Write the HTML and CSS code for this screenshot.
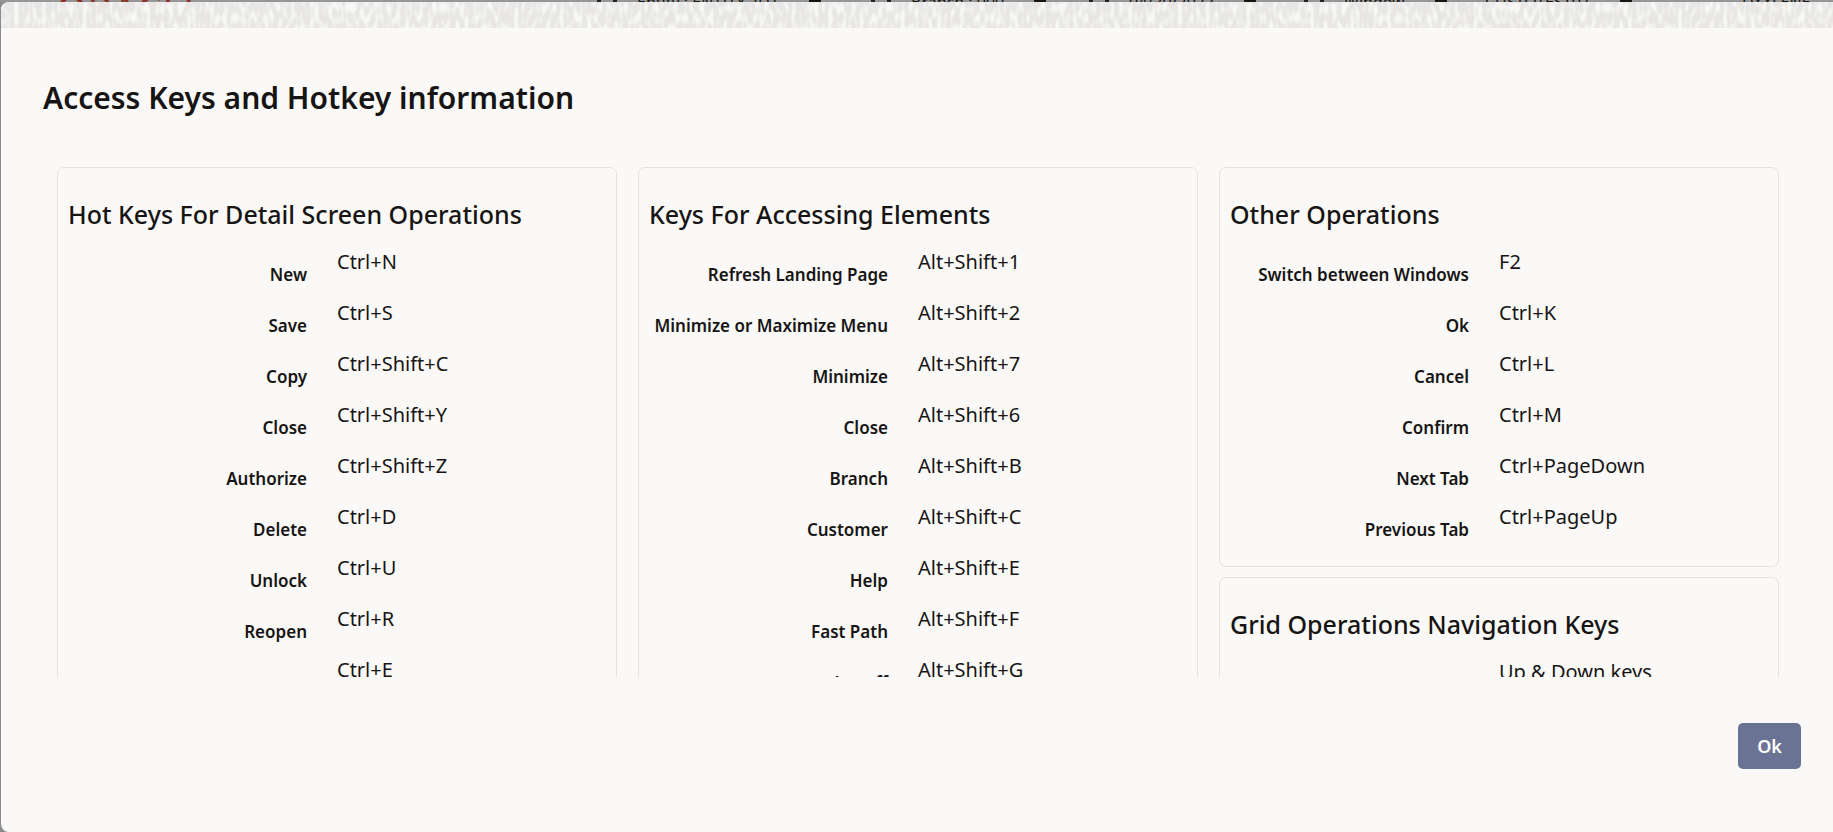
FILE: index.html
```html
<!DOCTYPE html>
<html lang="en">
<head>
    <meta charset="UTF-8">
    <meta name="viewport" content="width=device-width, initial-scale=1.0">
    <title>Access Keys and Hotkey information</title>
    <link rel="stylesheet" href="styles.css">
</head>
<body>
<div class="app-bar">
    <span class="brand">ORACLE</span>
    <span class="bar-item"><i class="bar-icon"></i>Entity : ENTITY_ID1<i class="bar-dot"></i></span>
    <span class="bar-item"><i class="bar-icon"></i>Branch : 000<i class="bar-dot"></i></span>
    <span class="bar-item"><i class="bar-icon"></i>04/20/2022<i class="bar-dot"></i></span>
    <span class="bar-item"><i class="bar-icon"></i>Window<i class="bar-dot"></i></span>
    <span class="bar-item">CUSTOTEST07<i class="bar-dot"></i></span>
    <span class="bar-item">DXXLENE</span>
</div>
<div class="dialog" role="dialog" aria-labelledby="title">
    <svg class="strip" aria-hidden="true">
        <filter id="grain" x="0" y="0" width="100%" height="100%">
            <feTurbulence type="fractalNoise" baseFrequency="0.22 0.09" numOctaves="1" seed="4"/>
            <feColorMatrix values="0 0 0 0 1  0 0 0 0 1  0 0 0 0 1  4 0 0 0 -1.7"/>
        </filter>
        <rect width="100%" height="100%" fill="#e8e7e5"/>
        <rect width="100%" height="100%" filter="url(#grain)" opacity="0.65"/>
    </svg>
    <h1 class="title" id="title">Access Keys and Hotkey information</h1>
    <div class="content">
        <div class="column">
            <section class="card">
                <h2>Hot Keys For Detail Screen Operations</h2>
                <dl class="keys">
                    <dt>New</dt><dd>Ctrl+N</dd>
                    <dt>Save</dt><dd>Ctrl+S</dd>
                    <dt>Copy</dt><dd>Ctrl+Shift+C</dd>
                    <dt>Close</dt><dd>Ctrl+Shift+Y</dd>
                    <dt>Authorize</dt><dd>Ctrl+Shift+Z</dd>
                    <dt>Delete</dt><dd>Ctrl+D</dd>
                    <dt>Unlock</dt><dd>Ctrl+U</dd>
                    <dt>Reopen</dt><dd>Ctrl+R</dd>
                    <dt></dt><dd>Ctrl+E</dd>
                </dl>
            </section>
        </div>
        <div class="column">
            <section class="card">
                <h2>Keys For Accessing Elements</h2>
                <dl class="keys">
                    <dt>Refresh Landing Page</dt><dd>Alt+Shift+1</dd>
                    <dt>Minimize or Maximize Menu</dt><dd>Alt+Shift+2</dd>
                    <dt>Minimize</dt><dd>Alt+Shift+7</dd>
                    <dt>Close</dt><dd>Alt+Shift+6</dd>
                    <dt>Branch</dt><dd>Alt+Shift+B</dd>
                    <dt>Customer</dt><dd>Alt+Shift+C</dd>
                    <dt>Help</dt><dd>Alt+Shift+E</dd>
                    <dt>Fast Path</dt><dd>Alt+Shift+F</dd>
                    <dt>Logoff</dt><dd>Alt+Shift+G</dd>
                </dl>
            </section>
        </div>
        <div class="column">
            <section class="card">
                <h2>Other Operations</h2>
                <dl class="keys">
                    <dt>Switch between Windows</dt><dd>F2</dd>
                    <dt>Ok</dt><dd>Ctrl+K</dd>
                    <dt>Cancel</dt><dd>Ctrl+L</dd>
                    <dt>Confirm</dt><dd>Ctrl+M</dd>
                    <dt>Next Tab</dt><dd>Ctrl+PageDown</dd>
                    <dt>Previous Tab</dt><dd>Ctrl+PageUp</dd>
                </dl>
            </section>
            <section class="card">
                <h2>Grid Operations Navigation Keys</h2>
                <dl class="keys">
                    <dt></dt><dd>Up &amp; Down keys</dd>
                </dl>
            </section>
        </div>
    </div>
    <div class="actions">
        <button type="button" class="ok">Ok</button>
    </div>
</div>
</body>
</html>
```
FILE: styles.css
```css
* {
    box-sizing: border-box;
}
body {
    margin: 0;
    height: 100vh;
    overflow: hidden;
    background-color: #8b8b8d;
    color: #161513;
    font-family: "Noto Sans", "Open Sans", sans-serif;
}
/* only a sliver of the app header shows above the dialog */
.app-bar {
    display: grid;
    grid-template-columns: 541fr 274fr 218fr 215fr 181fr 257fr 91fr;
    height: 2px;
    padding-left: 56px;
    overflow: hidden;
    background-color: #979797;
    font-size: 16px;
    line-height: 4px;
}
.brand {
    color: #8a3226;
    font-size: 40px;
    line-height: 20px;
}
.bar-item {
    display: flex;
    gap: 20px;
    white-space: nowrap;
}
.bar-icon {
    width: 20px;
    height: 2px;
    border: solid #222;
    border-width: 0 4px;
}
.bar-dot {
    width: 12px;
    height: 2px;
    margin-left: 10px;
    background-color: #161513;
}
.dialog {
    display: flex;
    flex-direction: column;
    height: calc(100vh - 2px);
    margin-left: 1px;
    overflow: hidden;
    background-color: #fbf9f8;
    border-radius: 8px 0 0 8px;
}
.strip {
    flex: none;
    width: 100%;
    height: 26px;
}
.title {
    margin: 48px 42px;
    font-size: 30px;
    line-height: 43px;
    font-weight: 600;
}
.content {
    display: flex;
    flex: 1;
    gap: 21px;
    min-height: 0;
    margin: 0 54px 0 56px;
    overflow: hidden;
}
.column {
    flex: 1;
}
.card {
    margin-bottom: 10px;
    padding: 28px 10px 15px;
    border: 1px solid #e4e2e0;
    border-radius: 7px;
}
.card h2 {
    margin: 0 0 13px;
    font-size: 25px;
    line-height: 36px;
    font-weight: 500;
}
.keys {
    display: grid;
    grid-template-columns: 239px 1fr;
    column-gap: 30px;
    grid-auto-rows: 51px;
    margin: 0;
}
.keys dt {
    padding-top: 18px;
    font-size: 17px;
    line-height: 24px;
    font-weight: 600;
    text-align: right;
    white-space: nowrap;
}
.keys dd {
    margin: 0;
    padding-top: 4px;
    font-size: 20px;
    line-height: 26px;
}
.actions {
    display: flex;
    justify-content: flex-end;
    padding: 46px 32px 63px;
}
.ok {
    min-width: 63px;
    height: 46px;
    border: none;
    border-radius: 5px;
    background-color: #6b7394;
    color: #fff;
    font-family: inherit;
    font-size: 18px;
    font-weight: 600;
    cursor: pointer;
}
.ok:hover {
    background-color: #596080;
}
```
